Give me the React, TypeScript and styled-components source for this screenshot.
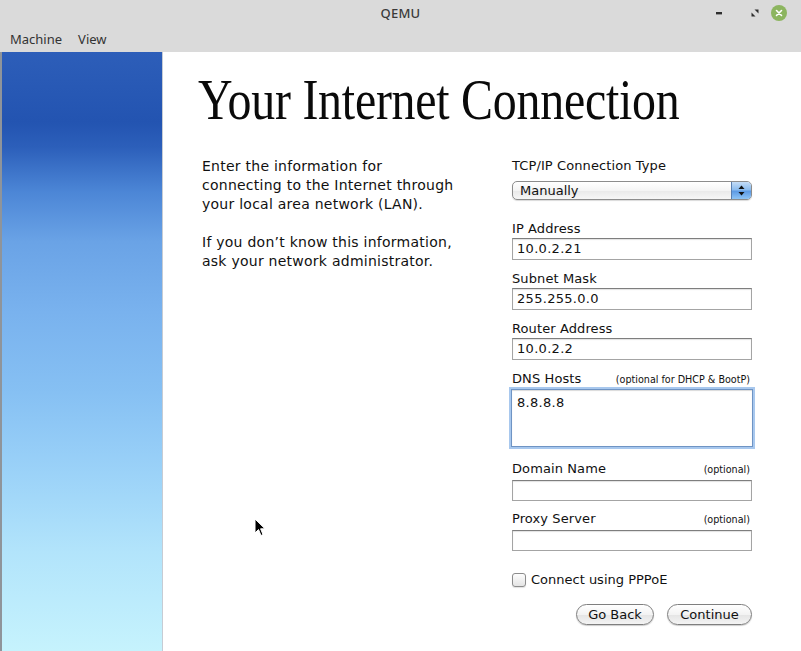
import React from "react";
import styled, { createGlobalStyle } from "styled-components";

const Global = createGlobalStyle`
  html, body { margin: 0; padding: 0; }
  body { width: 801px; height: 651px; overflow: hidden; background: #d9d9d9; }
  * { box-sizing: border-box; }
`;

const Window = styled.div`
  width: 801px;
  height: 651px;
  display: flex;
  flex-direction: column;
  position: relative;
`;

const TitleBar = styled.div`
  height: 26px;
  background: #dadada;
  display: grid;
  grid-template-columns: 1fr auto 1fr;
  align-items: center;
  font-family: "Noto Sans", sans-serif;
  font-size: 13px;
  color: #3a3a3a;
`;

const TitleText = styled.div`
  grid-column: 2;
  font-weight: 500;
  letter-spacing: 0.2px;
`;

const Controls = styled.div`
  grid-column: 3;
  justify-self: end;
  display: flex;
  align-items: center;
  padding-right: 14px;
`;

const CtrlBtn = styled.div<{ $mr: number }>`
  width: 20px;
  height: 26px;
  margin-right: ${(p) => p.$mr}px;
  display: flex;
  align-items: center;
  justify-content: center;
`;

const CloseBtn = styled.div`
  width: 16px;
  height: 16px;
  border-radius: 50%;
  background: #8cb55f;
  display: flex;
  align-items: center;
  justify-content: center;
`;

const MenuBar = styled.div`
  height: 26px;
  background: #dadada;
  display: flex;
  align-items: center;
  gap: 16px;
  padding-left: 10px;
  padding-bottom: 1px;
  font-family: "Noto Sans", sans-serif;
  font-size: 13px;
  color: #333;
`;

const Body = styled.div`
  flex: 1;
  display: flex;
  min-height: 0;
`;

const Sidebar = styled.div`
  width: 163px;
  border-left: 2px solid #8f949a;
  border-right: 1px solid #c6ccd4;
  background: linear-gradient(
    to bottom,
    #2d5eb9 0px,
    #2354b1 70px,
    #2c5fba 95px,
    #4c86d6 140px,
    #6aa3e6 190px,
    #79b2ee 260px,
    #86c0f3 340px,
    #9bd2f8 420px,
    #b2e4fb 500px,
    #c6f3fd 599px
  );
`;

const Main = styled.div`
  flex: 1;
  background: #ffffff;
  padding: 19px 0 0 39px;
  display: flex;
  flex-direction: column;
`;

const Heading = styled.h1`
  margin: 0 0 0 -4px;
  font-family: "Liberation Serif", serif;
  font-weight: normal;
  font-size: 58px;
  line-height: 58px;
  height: 58px;
  color: #0a0a0a;
  white-space: nowrap;
  transform: scaleX(0.826);
  transform-origin: left center;
  letter-spacing: -0.3px;
`;

const Columns = styled.div`
  display: flex;
  margin-top: 28px;
  font-family: "DejaVu Sans", sans-serif;
  color: #111;
`;

const Intro = styled.div`
  width: 310px;
  font-size: 14px;
  line-height: 19px;
  letter-spacing: 0.25px;
`;

const Para = styled.p`
  margin: 0 0 19px 0;
`;

const Form = styled.div`
  width: 240px;
  display: flex;
  flex-direction: column;
`;

const Field = styled.div<{ $top?: number }>`
  margin-top: ${(p) => p.$top ?? 0}px;
  display: flex;
  flex-direction: column;
`;

const LabelRow = styled.div<{ $gap?: number }>`
  display: flex;
  justify-content: space-between;
  align-items: baseline;
  height: 17px;
  line-height: 17px;
  margin-bottom: ${(p) => p.$gap ?? 1}px;
`;

const Label = styled.span`
  font-size: 13px;
  letter-spacing: 0.1px;
`;

const Hint = styled.span`
  font-size: 9.6px;
  padding-right: 2px;
`;

const Input = styled.div<{ $h?: number }>`
  height: ${(p) => p.$h ?? 22}px;
  border: 1px solid #a4a4a4;
  border-top-color: #7e7e7e;
  box-shadow: inset 0 1px 1px rgba(0, 0, 0, 0.12);
  background: #fff;
  font-size: 13px;
  line-height: 20px;
  padding-left: 4px;
  letter-spacing: 0.3px;
`;

const Area = styled.div`
  height: 58px;
  margin-left: -1px;
  margin-right: -1px;
  border: 1px solid #6f94c4;
  box-shadow: 0 0 0 2px #a8c8ee, inset 0 1px 1px rgba(0, 0, 0, 0.15);
  background: #fff;
  font-size: 13px;
  line-height: 20px;
  padding: 3px 0 0 5px;
  letter-spacing: 0.3px;
`;

const Select = styled.div`
  height: 19px;
  display: flex;
  border: 1px solid #8c8c8c;
  border-radius: 5px;
  overflow: hidden;
  background: linear-gradient(to bottom, #ffffff 0%, #f4f4f4 50%, #e9e9e9 51%, #f6f6f6 100%);
  box-shadow: 0 1px 1px rgba(0, 0, 0, 0.15);
`;

const SelectText = styled.div`
  flex: 1;
  font-size: 13px;
  line-height: 17px;
  padding-left: 7px;
`;

const SelectArrow = styled.div`
  width: 20px;
  border-left: 1px solid #5a7fb0;
  background: linear-gradient(to bottom, #c4dcf6 0%, #8cbcee 45%, #5d9ae4 55%, #8ec4f6 100%);
  display: flex;
  align-items: center;
  justify-content: center;
`;

const CheckRow = styled.label`
  display: flex;
  align-items: center;
  gap: 5px;
  margin-top: 21px;
  font-size: 13px;
  height: 15px;
`;

const Check = styled.span`
  width: 14px;
  height: 14px;
  border: 1px solid #8c8c8c;
  border-radius: 3px;
  background: linear-gradient(to bottom, #fdfdfd, #e4e4e4);
  box-shadow: 0 1px 1px rgba(0, 0, 0, 0.12);
`;

const Buttons = styled.div`
  display: flex;
  justify-content: flex-end;
  gap: 13px;
  margin-top: 17px;
`;

const Button = styled.button<{ $w: number }>`
  width: ${(p) => p.$w}px;
  height: 21px;
  border: 1px solid #7f7f7f;
  border-radius: 11px;
  background: linear-gradient(to bottom, #ffffff 0%, #f3f3f3 50%, #e4e4e4 51%, #f4f4f4 100%);
  box-shadow: 0 1px 1px rgba(0, 0, 0, 0.2);
  font-family: "DejaVu Sans", sans-serif;
  font-size: 13px;
  color: #111;
  padding: 0;
  line-height: 19px;
`;

const Cursor = styled.svg`
  position: absolute;
  left: 254px;
  top: 518px;
`;

export default function App() {
  return (
    <Window>
      <Global />
      <TitleBar>
        <TitleText>QEMU</TitleText>
        <Controls>
          <CtrlBtn $mr={16}>
            <svg width="8" height="4" viewBox="0 0 8 4">
              <rect x="1" y="1" width="6" height="2.4" fill="#2e2e2e" />
            </svg>
          </CtrlBtn>
          <CtrlBtn $mr={6}>
            <svg width="8" height="8" viewBox="0 0 8 8">
              <path d="M3.5 0.5 H7.5 V4.5 Z" fill="#2e2e2e" />
              <path d="M0.5 3.5 V7.5 H4.5 Z" fill="#2e2e2e" />
            </svg>
          </CtrlBtn>
          <CloseBtn>
            <svg width="8" height="8" viewBox="0 0 8 8">
              <path d="M1.5 1.5 L6.5 6.5 M6.5 1.5 L1.5 6.5" stroke="#ffffff" strokeWidth="1.6" strokeLinecap="round" />
            </svg>
          </CloseBtn>
        </Controls>
      </TitleBar>
      <MenuBar>
        <span>Machine</span>
        <span>View</span>
      </MenuBar>
      <Body>
        <Sidebar />
        <Main>
          <Heading>Your Internet Connection</Heading>
          <Columns>
            <Intro>
              <Para>
                Enter the information for
                <br />
                connecting to the Internet through
                <br />
                your local area network (LAN).
              </Para>
              <Para>
                If you don’t know this information,
                <br />
                ask your network administrator.
              </Para>
            </Intro>
            <Form>
              <Field>
                <LabelRow $gap={7}>
                  <Label>TCP/IP Connection Type</Label>
                </LabelRow>
                <Select>
                  <SelectText>Manually</SelectText>
                  <SelectArrow>
                    <svg width="7" height="11" viewBox="0 0 7 11">
                      <path d="M3.5 0.5 L6.5 4 H0.5 Z" fill="#111" />
                      <path d="M3.5 10.5 L6.5 7 H0.5 Z" fill="#111" />
                    </svg>
                  </SelectArrow>
                </Select>
              </Field>
              <Field $top={20}>
                <LabelRow>
                  <Label>IP Address</Label>
                </LabelRow>
                <Input>10.0.2.21</Input>
              </Field>
              <Field $top={10}>
                <LabelRow>
                  <Label>Subnet Mask</Label>
                </LabelRow>
                <Input>255.255.0.0</Input>
              </Field>
              <Field $top={10}>
                <LabelRow>
                  <Label>Router Address</Label>
                </LabelRow>
                <Input>10.0.2.2</Input>
              </Field>
              <Field $top={10}>
                <LabelRow $gap={2}>
                  <Label>DNS Hosts</Label>
                  <Hint>(optional for DHCP &amp; BootP)</Hint>
                </LabelRow>
                <Area>8.8.8.8</Area>
              </Field>
              <Field $top={13}>
                <LabelRow $gap={3}>
                  <Label>Domain Name</Label>
                  <Hint>(optional)</Hint>
                </LabelRow>
                <Input $h={21} />
              </Field>
              <Field $top={9}>
                <LabelRow $gap={3}>
                  <Label>Proxy Server</Label>
                  <Hint>(optional)</Hint>
                </LabelRow>
                <Input $h={21} />
              </Field>
              <CheckRow>
                <Check />
                <span>Connect using PPPoE</span>
              </CheckRow>
              <Buttons>
                <Button $w={78}>Go Back</Button>
                <Button $w={85}>Continue</Button>
              </Buttons>
            </Form>
          </Columns>
        </Main>
      </Body>
      <Cursor width="12" height="19" viewBox="0 0 12 19">
        <path d="M1 1 L1 15 L4.5 11.5 L7 17.5 L9 16.6 L6.6 10.8 L11 10.8 Z" fill="#000" stroke="#fff" strokeWidth="1" strokeLinejoin="round" />
      </Cursor>
    </Window>
  );
}
